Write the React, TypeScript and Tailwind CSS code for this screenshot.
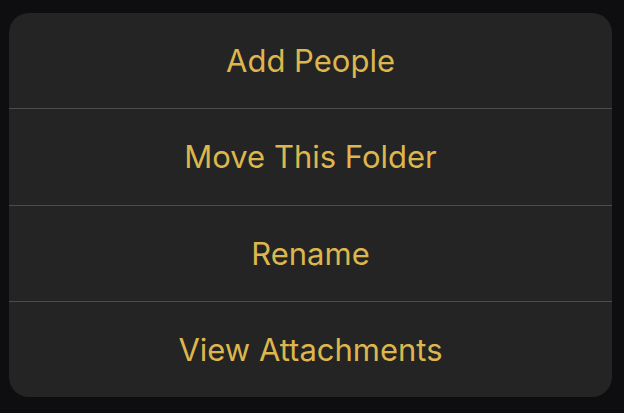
import React from 'react';

const items = ['Add People', 'Move This Folder', 'Rename', 'View Attachments'];

export default function App() {
  return (
    <div className="w-[624px] h-[413px] bg-[#0e0e10] pt-[13px] px-[9px] pb-[16px] font-['Inter',sans-serif]">
      <div className="w-[603px] h-[384px] bg-[#242424] rounded-[20px] overflow-hidden flex flex-col">
        {items.map((label, i) => (
          <div
            key={label}
            className={`flex-1 flex items-center justify-center ${i > 0 ? 'border-t border-[#4c4c4c]' : ''}`}
          >
            <span className="text-[#ddb64e] text-[31px] leading-none">{label}</span>
          </div>
        ))}
      </div>
    </div>
  );
}
